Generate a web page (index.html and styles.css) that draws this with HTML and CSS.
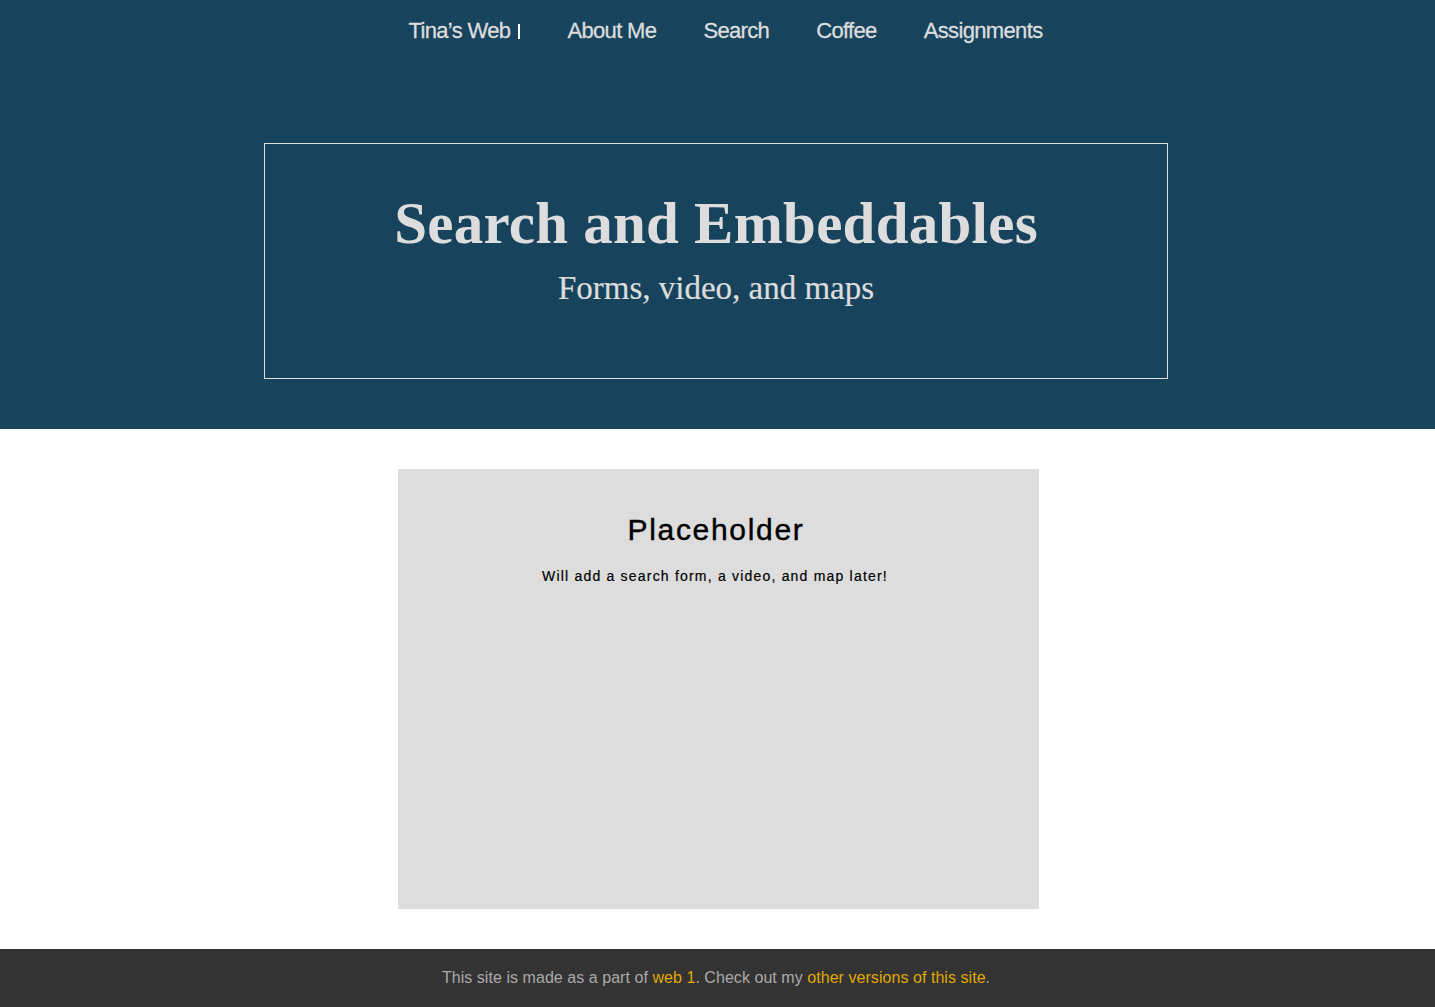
FILE: index.html
```html
<!DOCTYPE html>
<html lang="en">
<head>
<meta charset="utf-8">
<title>Search and Embeddables</title>
<link rel="stylesheet" href="styles.css">
</head>
<body>
<header class="site-header">
  <nav class="nav">
    <a class="nav-link brand" href="#">Tina’s Web<span class="cursor"></span></a>
    <a class="nav-link" href="#">About Me</a>
    <a class="nav-link" href="#">Search</a>
    <a class="nav-link" href="#">Coffee</a>
    <a class="nav-link" href="#">Assignments</a>
  </nav>
  <div class="hero-wrap">
    <div class="hero">
      <h1 class="hero-title">Search and Embeddables</h1>
      <p class="hero-sub">Forms, video, and maps</p>
    </div>
  </div>
</header>
<main class="main">
  <section class="card">
    <h2 class="card-title">Placeholder</h2>
    <p class="card-text">Will add a search form, a video, and map later!</p>
  </section>
</main>
<footer class="footer">
  <p>This site is made as a part of <a href="#">web 1</a>. Check out my <a href="#">other versions of this site</a>.</p>
</footer>
</body>
</html>
```
FILE: styles.css
```css
* { box-sizing: border-box; }
html, body { margin: 0; padding: 0; }
body {
  font-family: "Liberation Sans", Arial, sans-serif;
  background: #ffffff;
}
.site-header {
  background: #17435d;
  height: 429px;
  padding-top: 17px;
}
.nav {
  display: flex;
  justify-content: center;
  gap: 47px;
  height: 28px;
  align-items: center;
  padding-left: 16px;
}
.nav-link {
  color: #dddddd;
  text-decoration: none;
  font-size: 22px;
  line-height: 28px;
  letter-spacing: -0.65px;
  -webkit-text-stroke: 0.3px #dddddd;
  display: inline-flex;
  align-items: center;
}
.cursor {
  display: inline-block;
  width: 2px;
  height: 15px;
  background: #ffffff;
  margin-left: 8px;
  margin-top: 1px;
}
.hero-wrap {
  display: flex;
  justify-content: center;
  padding-right: 3px;
}
.hero {
  width: 904px;
  height: 236px;
  margin-top: 98px;
  border: 1px solid #dddddd;
  text-align: center;
  color: #dddddd;
  padding-top: 46px;
}
.hero-title {
  font-family: "Liberation Serif", "Times New Roman", serif;
  font-weight: bold;
  font-size: 59px;
  line-height: 66px;
  letter-spacing: 0.25px;
  margin: 0;
}
.hero-sub {
  font-family: "Liberation Serif", "Times New Roman", serif;
  font-size: 33px;
  line-height: 40px;
  margin: 12px 0 0;
  -webkit-text-stroke: 0.2px #dddddd;
}
.main {
  padding: 40px 0;
  display: flex;
  justify-content: center;
}
.card {
  width: 641px;
  height: 440px;
  margin-left: 1px;
  background: #dddddd;
  text-align: center;
  padding-top: 42px;
}
.card-title {
  font-size: 30px;
  line-height: 38px;
  font-weight: normal;
  margin: 0;
  padding-right: 4px;
  color: #000;
  letter-spacing: 1.7px;
  -webkit-text-stroke: 0.4px #000;
}
.card-text {
  font-size: 14px;
  line-height: 18px;
  margin: 18px 0 0;
  padding-right: 6px;
  color: #000;
  letter-spacing: 1.2px;
  -webkit-text-stroke: 0.2px #000;
}
.footer {
  background: #333333;
  height: 58px;
  display: flex;
  align-items: center;
  justify-content: center;
}
.footer p {
  margin: 0;
  color: #aaaaaa;
  font-size: 16px;
  letter-spacing: 0.05px;
  padding-right: 3px;
}
.footer a {
  color: #e0a800;
  text-decoration: none;
}
```
